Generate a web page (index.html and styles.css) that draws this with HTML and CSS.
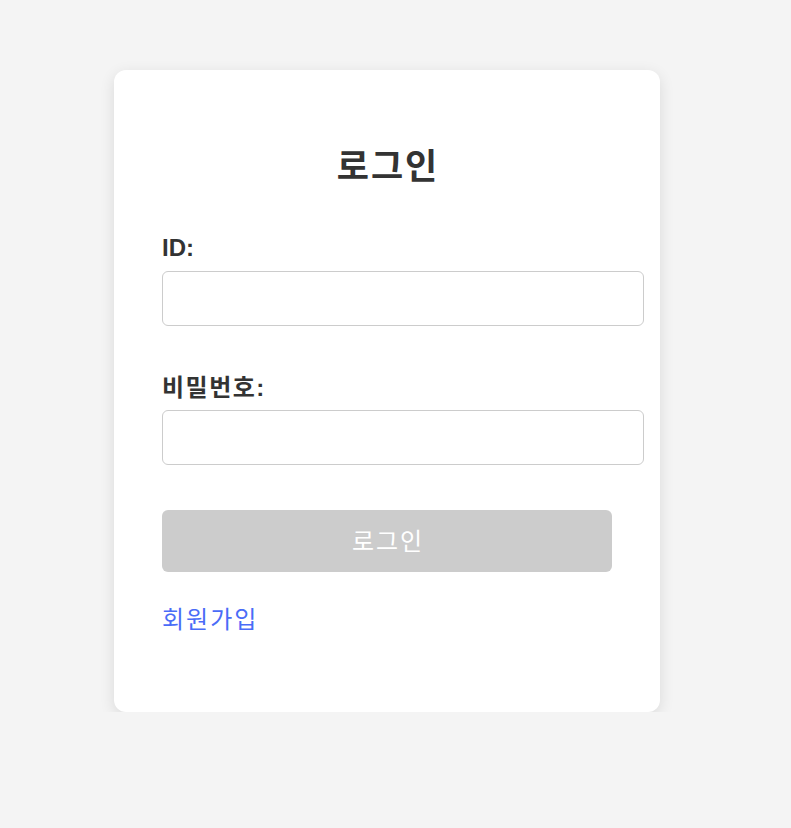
FILE: index.html
```html
<!DOCTYPE html>
<html lang="ko">
<head>
<meta charset="utf-8">
<title>로그인</title>
<link rel="stylesheet" href="styles.css">
</head>
<body>
<div class="page">
  <div class="card">
    <h1 class="title">로그인</h1>
    <form class="form">
      <label class="label" for="uid">ID:</label>
      <input class="input" id="uid" type="text">
      <label class="label label-pw" for="pw">비밀번호:</label>
      <input class="input" id="pw" type="password">
      <button class="btn" type="button" disabled>로그인</button>
    </form>
    <a class="link" href="#">회원가입</a>
  </div>
</div>
</body>
</html>
```
FILE: styles.css
```css
html, body {
  margin: 0;
  padding: 0;
  background: #f4f4f4;
}
body {
  font-family: "Liberation Sans", Arial, "Noto Sans CJK KR", sans-serif;
  color: #333;
}
.page {
  display: flex;
  justify-content: flex-start;
  padding: 70px 0 0 114px;
}
.card {
  width: 450px;
  padding: 48px;
  background: #fff;
  border-radius: 12px;
  box-shadow: 0 4px 15px rgba(0, 0, 0, 0.11);
  display: flex;
  flex-direction: column;
  align-items: flex-start;
}
.title {
  align-self: stretch;
  text-align: center;
  margin: 29px 0 47px;
  font-size: 35px;
  line-height: 40px;
  letter-spacing: 2px;
  text-indent: 2px;
  font-weight: 700;
  color: #333;
}
.form {
  display: flex;
  flex-direction: column;
  align-self: stretch;
}
.label {
  display: block;
  font-size: 24px;
  line-height: 28px;
  font-weight: 700;
  color: #333;
  margin-bottom: 9px;
}
.label-pw {
  margin-bottom: 8px;
  letter-spacing: 1.5px;
}
.input {
  box-sizing: content-box;
  width: 100%;
  height: 23px;
  padding: 15px;
  border: 1px solid #ccc;
  border-radius: 6px;
  font-size: 20px;
  font-family: inherit;
  background: #fff;
  margin: 0 0 48px;
}
.input + .btn {
  margin-top: -3px;
}
.btn {
  width: 450px;
  height: 62px;
  border: none;
  border-radius: 6px;
  background: #ccc;
  color: #fff;
  font-size: 24px;
  letter-spacing: 2px;
  text-indent: 2px;
  font-family: inherit;
  padding: 0 0 3px;
}
.link {
  margin-top: 34px;
  margin-bottom: 30px;
  font-size: 24px;
  line-height: 28px;
  letter-spacing: 2px;
  color: #4a6cf7;
  text-decoration: none;
}
```
